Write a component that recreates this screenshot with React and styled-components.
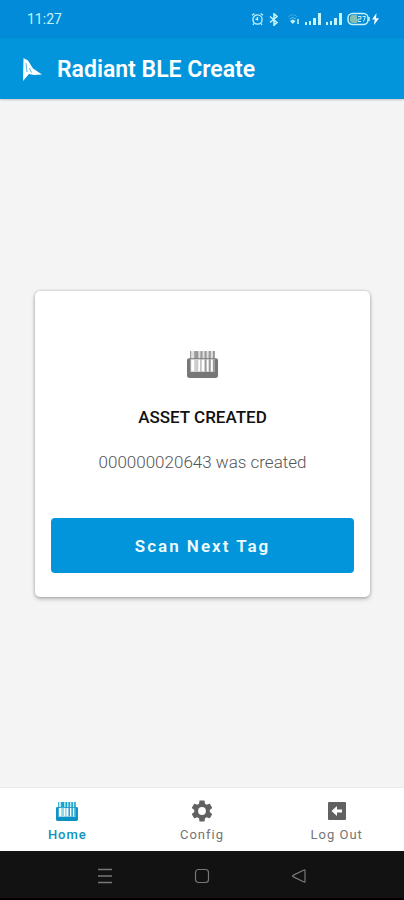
import React from 'react';
import styled, { createGlobalStyle, ThemeProvider } from 'styled-components';

const theme = {
    primary: '#0295db',
    status: '#028bd8',
    page: '#f4f4f4',
    icon: '#616161',
};

const GlobalStyle = createGlobalStyle`
    * {
        box-sizing: border-box;
    }

    body {
        margin: 0;
        font-family: Roboto, sans-serif;
    }

    button {
        padding: 0;
        border: 0;
        background: none;
        font-family: inherit;
        cursor: pointer;
    }

    svg {
        display: block;
    }
`;

const Screen = styled.div`
    display: flex;
    flex-direction: column;
    min-height: 100vh;
    background: ${({ theme }) => theme.page};
`;

const StatusBar = styled.div`
    display: flex;
    align-items: center;
    justify-content: space-between;
    height: 38px;
    padding: 0 24px 0 27px;
    background: ${({ theme }) => theme.status};
    color: #c4f3f8;
    font-size: 14px;
`;

const StatusIcons = styled.div`
    display: flex;
    align-items: center;
    gap: 5px;
`;

const Header = styled.header`
    display: flex;
    align-items: center;
    gap: 14px;
    height: 61px;
    padding: 2px 22px 0;
    background: ${({ theme }) => theme.primary};
    box-shadow: 0 1px 2px rgba(0, 0, 0, 0.2);
    color: #fff;
`;

const Title = styled.h1`
    margin: 0;
    font-size: 23px;
    font-weight: 600;
    line-height: 28px;
`;

const Main = styled.main`
    display: flex;
    flex: 1;
    align-items: center;
    padding: 26px 34px 24px 35px;
`;

const Card = styled.section`
    display: flex;
    flex: 1;
    flex-direction: column;
    align-items: center;
    padding: 60px 16px 24px;
    border-radius: 5px;
    background: #fff;
    box-shadow: 0 2px 4px rgba(0, 0, 0, 0.25), 0 0 3px rgba(0, 0, 0, 0.2);
`;

const CardTitle = styled.h2`
    margin: 29px 0 23px;
    font-size: 17px;
    font-weight: 500;
    line-height: 20px;
    color: #111;
`;

const CardText = styled.p`
    margin: 0 0 44px;
    font-size: 17px;
    font-weight: 300;
    line-height: 24px;
    color: #555;
`;

const PrimaryButton = styled.button`
    align-self: stretch;
    height: 55px;
    border-radius: 4px;
    && {
        background: ${({ theme }) => theme.primary};
    }
    color: #f0fdff;
    font-size: 17px;
    font-weight: 600;
    letter-spacing: 2px;
`;

const TabBar = styled.nav`
    display: flex;
    height: 64px;
    border-top: 1px solid #ececec;
    background: #fff;
`;

const Tab = styled.button`
    display: flex;
    flex: 1;
    flex-direction: column;
    align-items: center;
    justify-content: center;
    gap: 6px;
    && {
        padding-top: 5px;
    }
    color: ${({ $active }) => ($active ? '#0d93bd' : '#757575')};
    font-size: 13px;
    font-weight: ${({ $active }) => ($active ? 500 : 400)};
    line-height: 16px;
    letter-spacing: 1px;
`;

const IconSlot = styled.span`
    display: flex;
    align-items: center;
    height: 20px;
`;

const SystemBar = styled.div`
    display: flex;
    align-items: center;
    justify-content: center;
    gap: 73px;
    height: 49px;
    padding-top: 2px;
    border-bottom: 2px solid #000;
    background: #121212;
`;

const AlarmIcon = () => (
    <svg width="13" height="14" viewBox="0 0 13 14" fill="none" stroke="currentColor" strokeWidth="1.3">
        <circle cx="6.5" cy="7.5" r="4.6" />
        <path d="M6.5 5v2.8l-2-1M1 3.2 3.4 1.4M12 3.2 9.6 1.4M3 11.5l-1 1.3M10 11.5l1 1.3" />
    </svg>
);

const BluetoothIcon = () => (
    <svg width="10" height="13" viewBox="0 0 10 13" fill="none" stroke="currentColor" strokeWidth="1.6">
        <path d="m1 3.5 7 6-3 2.7V.8l3 2.7-7 6" />
    </svg>
);

const WifiIcon = () => (
    <svg width="16" height="12" viewBox="0 0 16 12" fill="none" stroke="currentColor">
        <path d="M4 3.8q4.5-4 9.5 0" opacity=".3" />
        <path d="M5.5 6q3.3-3 6.5 0" opacity=".5" />
        <path d="m6 8 2.800-1.600L11.500 8 8.800 11z" fill="currentColor" stroke="none" />
        <path d="M14 6v5" strokeWidth="1.5" />
    </svg>
);

const SignalIcon = () => (
    <svg width="16" height="13" viewBox="0 0 16 13" fill="currentColor">
        <path d="M0 9h2v3H0zM4 8h2v4H4zM8 5h3v7H8zM13 0h3v12h-3z" />
    </svg>
);

const BatteryIcon = () => (
    <svg width="33" height="14" viewBox="0 0 33 14" fill="none">
        <rect x="1" y="1.5" width="20" height="11" rx="4.5" stroke="currentColor" strokeWidth="1.5" />
        <path d="M6 3h4v8H6a3 3 0 0 1-3-3V6a3 3 0 0 1 3-3z" fill="#83bfb4" />
        <path d="M11 4.5h3V7h-3v2.500h3M15.500 4.500h3l-2 5" stroke="currentColor" />
        <path d="M22 5v4" stroke="currentColor" strokeWidth="1.5" />
        <path d="M29.500 1 25 7.500h2.700L27 13l5-6.800h-3z" fill="#fff" />
    </svg>
);

const LogoIcon = () => (
    <svg width="21" height="24" viewBox="0 0 21 24">
        <path d="M1.500 0 6 2.500l5 8 9 6-8 .5-5-1-6 7z" fill="#fff" />
        <path d="m4 5 1 9M7.500 10l2 4.500" stroke="#55b8e8" fill="none" />
    </svg>
);

const ScannerIcon = ({ width, height, body, bars, shade }) => (
    <svg width={width} height={height} viewBox="0 0 30 26">
        <path d="M3 0h24v8H3z" fill={shade} opacity=".6" />
        <path d="M3 0h1v8H3zM7 0h4v8H7zM13 0h2v8h-2zM17 0h2v8h-2zM21 0h2v8h-2zM25 0h2v8h-2z" fill={bars} />
        <path d="M0 9q0-2 2-2h26q2 0 2 2v15q0 2-2 2H2q-2 0-2-2z" fill={body} />
        <path d="M3 8h24v12H3z" fill="#fff" />
        <path d="M3 8h1v12H3zM13 8h1v12h-1zM17 8h2v12h-2zM21 8h2v12h-2zM25 8h2v12h-2z" fill={bars} />
        <path d="M7 8h4v12H7z" fill={shade} />
    </svg>
);

const GearIcon = () => (
    <svg width="26" height="26" viewBox="0 0 24 24" fill="#616161">
        <path d="M19.140 12.940c.04-.3.060-.610.060-.940 0-.320-.020-.640-.070-.940l2.030-1.580a.49.49 0 0 0 .12-.61l-1.920-3.320a.488.488 0 0 0-.59-.22l-2.390.96c-.5-.38-1.030-.7-1.620-.94l-.36-2.540a.484.484 0 0 0-.48-.41h-3.840c-.24 0-.43.17-.47.41l-.36 2.540c-.59.24-1.130.57-1.620.94l-2.390-.96c-.22-.08-.47 0-.59.22L2.740 8.870c-.12.21-.08.47.12.61l2.030 1.580c-.05.3-.09.63-.09.94s.02.64.07.94l-2.030 1.580a.49.49 0 0 0-.12.61l1.920 3.320c.12.22.37.29.59.22l2.390-.96c.5.38 1.030.7 1.620.94l.36 2.540c.05.24.24.41.48.41h3.840c.24 0 .44-.17.47-.41l.36-2.540c.59-.24 1.130-.56 1.620-.94l2.390.96c.22.08.47 0 .59-.22l1.920-3.320c.12-.22.07-.47-.12-.61zM12 15.600A3.600 3.600 0 1 1 12 8.400a3.600 3.600 0 0 1 0 7.200z" />
    </svg>
);

const LogOutIcon = () => (
    <svg width="18" height="20" viewBox="0 0 18 20">
        <rect y="1" width="18" height="18" rx="1" fill="#616161" />
        <path d="m3.500 10 5.500-5v3.500h5v3H9V15z" fill="#fff" />
    </svg>
);

const tabs = [
    {
        name: 'Home',
        active: true,
        icon: <ScannerIcon width={24} height={19} body="#0b91c4" bars="#14a0cc" shade="#8bdbe5" />,
    },
    { name: 'Config', icon: <GearIcon /> },
    { name: 'Log Out', icon: <LogOutIcon /> },
];

const App = () => (
    <ThemeProvider theme={theme}>
        <GlobalStyle />
        <Screen>
            <StatusBar>
                <span>11:27</span>
                <StatusIcons>
                    <AlarmIcon />
                    <BluetoothIcon />
                    <WifiIcon />
                    <SignalIcon />
                    <SignalIcon />
                    <BatteryIcon />
                </StatusIcons>
            </StatusBar>
            <Header>
                <LogoIcon />
                <Title>Radiant BLE Create</Title>
            </Header>
            <Main>
                <Card>
                    <ScannerIcon width={31} height={27} body="#777" bars="#999" shade="#ccc" />
                    <CardTitle>ASSET CREATED</CardTitle>
                    <CardText>000000020643 was created</CardText>
                    <PrimaryButton type="button">Scan Next Tag</PrimaryButton>
                </Card>
            </Main>
            <TabBar>
                {tabs.map(({ name, active, icon }) => (
                    <Tab key={name} type="button" $active={active}>
                        <IconSlot>{icon}</IconSlot>
                        {name}
                    </Tab>
                ))}
            </TabBar>
            <SystemBar>
                <button type="button" aria-label="Recent apps">
                    <svg width="24" height="16" viewBox="0 0 24 16" stroke="#777" strokeWidth="1.4">
                        <path d="M5 1.500h14M5 8h14M5 14.500h14" />
                    </svg>
                </button>
                <button type="button" aria-label="Home screen">
                    <svg width="24" height="16" viewBox="0 0 24 16" fill="none" stroke="#777" strokeWidth="1.2">
                        <rect x="5.5" y="1.5" width="13" height="13" rx="3" />
                    </svg>
                </button>
                <button type="button" aria-label="Back">
                    <svg width="24" height="16" viewBox="0 0 24 16" fill="none" stroke="#777" strokeWidth="1.2">
                        <path d="M18 2.500v11q0 1-1 .5L6 8.600q-1-.6 0-1.200L17 2q1-.5 1 .5z" />
                    </svg>
                </button>
            </SystemBar>
        </Screen>
    </ThemeProvider>
);

export default App;
